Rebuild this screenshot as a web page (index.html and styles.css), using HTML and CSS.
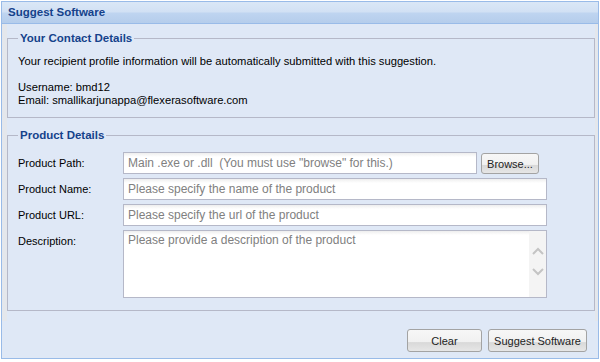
FILE: index.html
```html
<!DOCTYPE html>
<html lang="en">

<head>
    <meta charset="UTF-8">
    <title>Suggest Software</title>
    <link rel="stylesheet" href="styles.css">
</head>

<body>
    <div class="window">
        <div class="header">Suggest Software</div>
        <div class="body">
            <fieldset class="group contact">
                <legend>Your Contact Details</legend>
                <p>Your recipient profile information will be automatically submitted with this suggestion.</p>
                <p class="gap">Username: bmd12<br>Email: smallikarjunappa@flexerasoftware.com</p>
            </fieldset>
            <fieldset class="group product">
                <legend>Product Details</legend>
                <div class="form">
                    <label>Product Path:</label>
                    <div class="path-row">
                        <input type="text" class="path" placeholder='Main .exe or .dll  (You must use "browse" for this.)'>
                        <button class="btn browse">Browse...</button>
                    </div>
                    <label>Product Name:</label>
                    <input type="text" placeholder="Please specify the name of the product">
                    <label>Product URL:</label>
                    <input type="text" placeholder="Please specify the url of the product">
                    <label>Description:</label>
                    <div class="textarea-box">
                        <textarea placeholder="Please provide a description of the product"></textarea>
                        <div class="scroll">
                            <svg width="12" height="8" viewBox="0 0 12 8"><path d="M1 7 L6 2 L11 7" fill="none" stroke="#c4c4c4" stroke-width="2"/></svg>
                            <svg width="12" height="8" viewBox="0 0 12 8"><path d="M1 1 L6 6 L11 1" fill="none" stroke="#c4c4c4" stroke-width="2"/></svg>
                        </div>
                    </div>
                </div>
            </fieldset>
        </div>
        <div class="footer">
            <button class="btn clear">Clear</button>
            <button class="btn suggest">Suggest Software</button>
        </div>
    </div>
</body>

</html>
```

FILE: styles.css
```css
body {
    font-family: "Liberation Sans", Arial, sans-serif;
    font-size: 11px;
    background-color: #ffffff;
    margin: 0;
    padding: 1px;
}

.window {
    width: 596px;
    border: 1px solid #99bbe8;
    background-color: #dfe8f6;
}

.header {
    height: 21px;
    line-height: 21px;
    padding-left: 6px;
    font-weight: bold;
    font-size: 11.5px;
    color: #15428b;
    border-bottom: 1px solid #99bbe8;
    background: linear-gradient(to bottom, #dae7f6 0%, #d2e1f4 45%, #bed4f0 55%, #b5cdeb 100%);
}

.body {
    width: 596px;
    height: 297px;
    padding-top: 7px;
    box-sizing: border-box;
    border-left: 5px solid #e4e7ec;
    border-right: 3px solid #e4e7ec;
}

.group {
    margin: 0;
    padding: 10px;
    border: 1px solid #b5b8c8;
    min-width: 0;
}

.group legend {
    padding: 0 2px;
    line-height: 14px;
    font-weight: bold;
    font-size: 11.5px;
    color: #15428b;
}

.group p {
    margin: 0;
    line-height: 13px;
    font-size: 11.2px;
    color: #000;
}

.group p.gap {
    margin-top: 13px;
}

.product {
    margin-top: 10px;
    padding-bottom: 12px;
}

.form {
    display: grid;
    grid-template-columns: 105px 424px;
    row-gap: 4px;
    align-items: start;
}

.form label {
    line-height: 22px;
    color: #000;
}

.path-row {
    display: flex;
    gap: 4px;
}

input[type="text"],
textarea {
    font-family: "Liberation Sans", Arial, sans-serif;
    font-size: 12px;
    color: #000;
    border: 1px solid #b5b8c8;
    background: linear-gradient(to bottom, #eeeeee 0, #ffffff 4px);
    box-sizing: border-box;
    margin: 0;
}

input[type="text"] {
    height: 22px;
    padding: 0 4px;
    width: 100%;
}

input.path {
    width: 354px;
}

input::placeholder,
textarea::placeholder {
    color: #808080;
}

.textarea-box {
    display: flex;
    height: 68px;
    box-sizing: border-box;
    border: 1px solid #b5b8c8;
    background: linear-gradient(to bottom, #eeeeee 0, #ffffff 4px);
}

.textarea-box textarea {
    flex: 1;
    border: none;
    background: transparent;
    resize: none;
    padding: 2px 4px;
    outline: none;
}

.scroll {
    width: 17px;
    background-color: #f4f4f4;
    display: flex;
    flex-direction: column;
    align-items: center;
    padding-top: 16px;
    gap: 13px;
}

.btn {
    font-family: "Liberation Sans", Arial, sans-serif;
    font-size: 11px;
    color: #222;
    border: 1px solid #a3a3a3;
    border-radius: 3px;
    background: linear-gradient(to bottom, #f7f7f7 0%, #f1f1f1 55%, #d9d9d9 60%, #e6e6e6 100%);
    padding: 0;
    cursor: pointer;
}

.browse {
    width: 58px;
    height: 21px;
    margin-top: 1px;
}

.footer {
    height: 37px;
    display: flex;
    justify-content: flex-end;
    align-items: flex-start;
    gap: 6px;
    padding: 8px 11px 0 0;
    box-sizing: border-box;
}

.clear {
    width: 75px;
    height: 23px;
}

.suggest {
    width: 99px;
    height: 23px;
}
```
